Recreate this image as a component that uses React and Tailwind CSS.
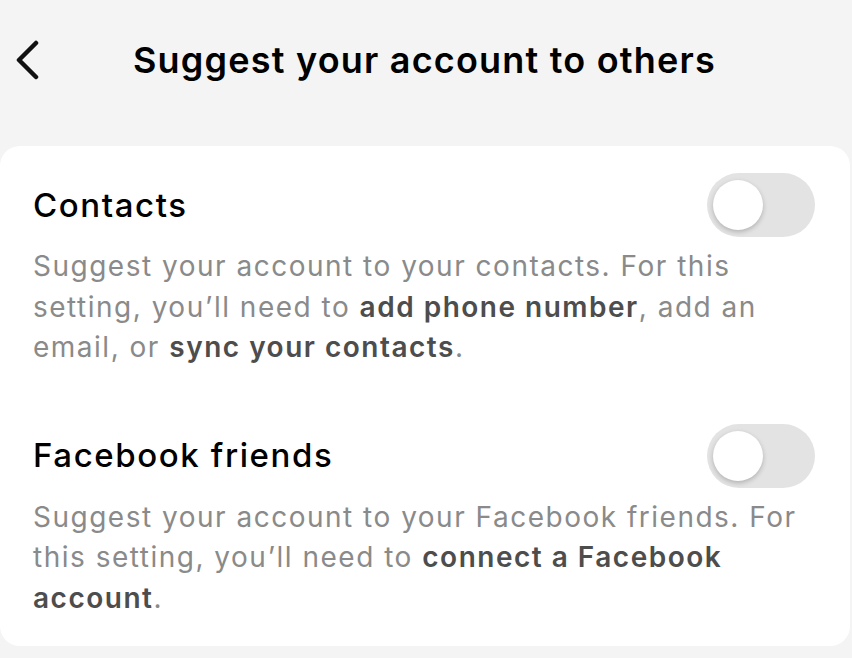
import { useState } from 'react';

const Toggle = ({ on, onChange }) => (
  <button
    onClick={onChange}
    className={`relative mr-[2px] h-[64px] w-[108px] shrink-0 rounded-full ${on ? 'bg-[#fe2c55]' : 'bg-[#e3e3e3]'}`}
  >
    <span
      className={`absolute top-[7px] h-[50px] w-[50px] rounded-full bg-white shadow-[0_2px_5px_rgba(0,0,0,0.22)] ${on ? 'left-[51px]' : 'left-[6px]'}`}
    />
  </button>
);

const Setting = ({ title, on, onChange, children }) => (
  <div>
    <div className="flex items-center justify-between">
      <h2 className="text-[33px] font-medium leading-none tracking-[1.6px] text-black">{title}</h2>
      <Toggle on={on} onChange={onChange} />
    </div>
    <p className="mt-[9px] text-[28px] leading-[40.5px] tracking-[1.5px] text-[#8a8a8a]">{children}</p>
  </div>
);

const App = () => {
  const [contacts, setContacts] = useState(false);
  const [facebook, setFacebook] = useState(false);

  return (
    <div
      className="min-h-[658px] w-full bg-[#f4f4f4]"
      style={{ fontFamily: 'Inter, "Noto Sans", sans-serif' }}
    >
      <header className="flex h-[120px] items-center px-[14px]">
        <svg width="28" height="40" viewBox="0 0 28 40" fill="none" className="shrink-0">
          <path d="M22 3 L5 20 L22 37" stroke="#111" strokeWidth="4.5" strokeLinecap="round" strokeLinejoin="round" />
        </svg>
        <h1 className="ml-[91px] text-[36px] font-semibold tracking-[1.2px] text-black">
          Suggest your account to others
        </h1>
      </header>

      <div className="mr-[2px] mt-[26px] rounded-[20px] bg-white px-[33px] pb-[28px] pt-[27px]">
        <Setting title="Contacts" on={contacts} onChange={() => setContacts(!contacts)}>
          Suggest your account to your contacts. For this setting, you’ll need to{' '}
          <span className="font-semibold text-[#4d4d4d]">add phone number</span>, add an email, or{' '}
          <span className="font-semibold text-[#4d4d4d]">sync your contacts</span>.
        </Setting>
        <div className="h-[56px]" />
        <Setting title="Facebook friends" on={facebook} onChange={() => setFacebook(!facebook)}>
          Suggest your account to your Facebook friends. For this setting, you’ll need to{' '}
          <span className="font-semibold text-[#4d4d4d]">connect a Facebook account</span>.
        </Setting>
      </div>
    </div>
  );
};

export default App;
